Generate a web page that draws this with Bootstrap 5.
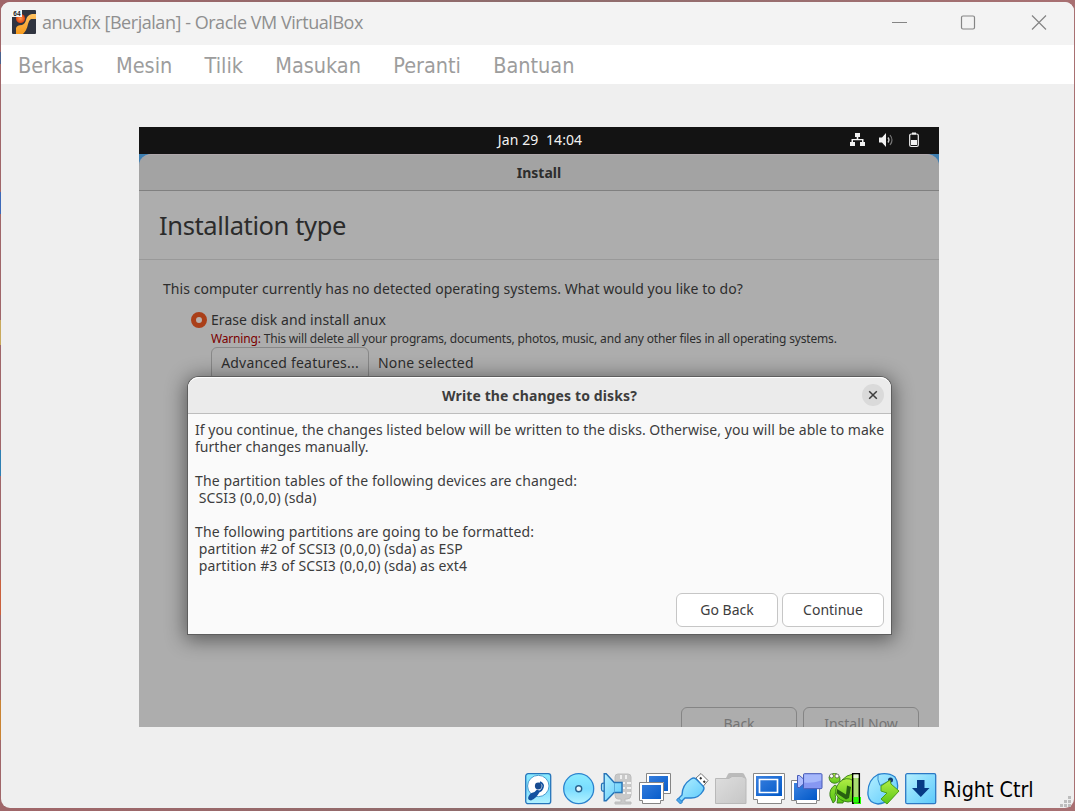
<!DOCTYPE html>
<html lang="id">
<head>
<meta charset="utf-8">
<meta name="viewport" content="width=device-width, initial-scale=1">
<title>anuxfix [Berjalan] - Oracle VM VirtualBox</title>
<link href="https://cdn.jsdelivr.net/npm/bootstrap@5.3.0/dist/css/bootstrap.min.css" rel="stylesheet">
<style>
body{width:1075px;height:811px;overflow:hidden;padding:2px 1px 3px;background:linear-gradient(#a0666900 52px,#49618e 52px 64px,#a0666900 64px 192px,#3d69b8 192px 214px,#a0666900 214px 320px,#c9a95c 320px 345px,#a0666900 345px 450px,#2e7fb3 450px 476px,#a0666900 476px 580px,#c9603c 580px 615px,#a0666900 615px 700px,#c98332 700px 740px,#a0666900 740px) 0 0/1px 811px no-repeat,linear-gradient(90deg,#a06669,#8d6c6c 50%,#a87072);font-family:"Noto Sans",sans-serif;color:#3d3d3d}
.vm-window{height:806px;background:#efefef;border-radius:9px;overflow:hidden}
.title-row{height:43px;background:#f3f3f3;padding-left:11px;padding-right:26px;padding-bottom:3px}
.title-text{font:18px "Open Sans",sans-serif;letter-spacing:-.46px;color:#8f8f8f;margin-left:6px;white-space:nowrap}
.menu-row{height:39px;background:#fff;padding-left:17px;gap:32.300px;font-family:"DejaVu Sans Condensed","DejaVu Sans",sans-serif;font-stretch:condensed;font-size:21.500px;letter-spacing:-.02px;color:#9d9d9d;line-height:42px}
.guest-wrap{padding:43px 0 0 138px}
.guest{width:800px;height:600px;background:#adadad;overflow:hidden;position:relative}
.top-panel{height:27px;background:#131313;color:#f2f2f2;position:relative;font-size:14px;line-height:26px;padding-left:2px}
.tray{position:absolute;right:17px;top:5px}
.sky{background:#3e7fb1}
.install-head{height:37px;background:#a3a3a3;border-bottom:1px solid #808080;border-top:1px solid #b0a8ac;border-radius:12px 12px 0 0;font-weight:700;font-size:14px;line-height:36px;color:#2d2d2d}
.page-title{height:69px;border-bottom:1px solid #999;padding-left:20px;font-size:25.500px;letter-spacing:-.38px;line-height:69px;color:#2b2b2b}
.t{font-size:14px;letter-spacing:.055px;white-space:pre}
.formatted{letter-spacing:.11px}
.dim{color:#2d2d2d}
.choices{padding:20px 0 0 24px}
.choices>div{line-height:18px}
.erase-row{margin:13px 0 0 28px}
.dot{width:16px;height:16px;border-radius:50%;border:5.500px solid #aa3f19;background:#b9b0ac;margin-right:4px}
.warn{font-size:12px;letter-spacing:-.178px;white-space:pre;margin-left:48px;padding-top:1px}
.warn-label{color:#7b0000}
.choices>.adv-row{margin:-1px 0 0 48px}
.adv{width:158px;height:34px;border:1px solid #888;border-radius:6px;line-height:30px;margin-right:9px;letter-spacing:.2px}
.none-sel{letter-spacing:.15px;margin-top:-3px}
.dlg{position:absolute;left:49px;top:250px;width:703px;height:257px;background:#fafafa;border-radius:11px 11px 0 0;box-shadow:0 0 0 1px #5e5e5e,0 3px 20px 3px #0000007a}
.dlg-head{height:37px;background:#ebebeb;border-bottom:1px solid #bdbdbd;border-top:1px solid #fff;border-radius:11px 11px 0 0;font-size:14px;font-weight:700;letter-spacing:.12px;line-height:36px;position:relative}
.dlg-close{position:absolute;right:7px;top:6px}
.dlg-body{padding:7px 7px 0;line-height:17px;letter-spacing:.04px}
.dlg-foot{padding:0 7px 7px}
.btn-gtk{width:102px;height:34px;background:#fff;border:1px solid #c6c6c6;border-radius:6px;padding:0;font-size:14px;line-height:30px;color:#3d3d3d}
.btn-dim{width:116px;height:34px;background:none;border:1px solid #858585;border-radius:6px;padding:0;font-size:14px;line-height:30px;color:#747474}
.foot{position:absolute;right:20px;top:580px;gap:6px}
.status{padding:46px 0 0 521px;height:124px}
.status svg{display:block;flex:none}
.host-key{font:21.300px/34px "DejaVu Sans Condensed","DejaVu Sans",sans-serif;font-stretch:condensed;color:#000;margin-left:3px;white-space:nowrap}
.grip{position:absolute;left:1060px;top:796px}
</style>
</head>
<body>
<div class="vm-window">
<header class="title-row d-flex align-items-center">
<svg width="24" height="24" viewBox="0 0 24 24"><defs><linearGradient id="or" x2="0" y2="1"><stop stop-color="#ffc261"/><stop offset="1" stop-color="#f79a1c"/></linearGradient><radialGradient id="rd"><stop stop-color="#ff9a51"/><stop offset="1" stop-color="#e2420d"/></radialGradient></defs><rect width="24" height="24" rx="1" fill="#303440"/><path d="M24 4v5h-5q-2 1-3 5-1 6-5 10H4v-6q1-3 6-3 3-1 4-5 1-5 6-6z" fill="url(#or)"/><circle cx="8.500" cy="8.500" r="4.500" fill="url(#rd)"/><rect width="10" height="7" fill="#f7f7f7"/><text x="1.300" y="5.800" font-size="6.500" font-weight="700" font-family="Liberation Sans,sans-serif" fill="#222">64</text></svg>
<span class="title-text">anuxfix [Berjalan] - Oracle VM VirtualBox</span>
<svg class="ms-auto" width="156" height="18" viewBox="0 0 156 18" fill="none" stroke="#858585" stroke-width="1.200"><path d="M0 9.500h15M140 2.500l14 14M154 2.500l-14 14"/><rect x="69.500" y="3" width="13" height="13" rx="1.500"/></svg>
</header>
<nav class="menu-row d-flex"><span>Berkas</span><span>Mesin</span><span>Tilik</span><span>Masukan</span><span>Peranti</span><span>Bantuan</span></nav>
<main class="guest-wrap">
<div class="guest">
<div class="top-panel text-center"><span class="t formatted">Jan 29  14:04</span>
<svg class="tray" width="72" height="16" viewBox="0 0 72 16" fill="#f2f2f2"><path d="M5 1h5v4H8.300v2H13.500v3H15v4h-5v-4h2V8.200H3V10h2v4H0v-4h1.500V7h5.200V5H5z"/><path d="M29 5.500h3L36 1v14l-4-4.500h-3z"/><path d="M38 5.500q2 2.500 0 5" fill="none" stroke="#ccc" stroke-width="1.300"/><path d="M40 3q4 5 0 10" fill="none" stroke="#777" stroke-width="1.200"/><path d="M62 .5h4v2h-4zM61 8h6v5h-6z"/><rect x="59.700" y="2" width="8.600" height="12.500" rx="1.500" fill="none" stroke="#f2f2f2" stroke-width="1.200"/></svg></div>
<div class="sky"><div class="install-head text-center">Install</div></div>
<div class="page-title">Installation type</div>
<div class="choices dim">
<div class="t">This computer currently has no detected operating systems. What would you like to do?</div>
<div class="t d-flex align-items-center erase-row"><span class="dot"></span><span>Erase disk and install anux</span></div>
<div class="warn"><span class="warn-label">Warning:</span> This will delete all your programs, documents, photos, music, and any other files in all operating systems.</div>
<div class="d-flex align-items-center t adv-row"><span class="adv text-center">Advanced features...</span><span class="none-sel">None selected</span></div>
</div>
<div class="foot d-flex"><button class="btn btn-dim">Back</button><button class="btn btn-dim">Install Now</button></div>
<section class="dlg d-flex flex-column">
<div class="dlg-head text-center">Write the changes to disks?
<svg class="dlg-close" width="22" height="22" viewBox="0 0 22 22"><circle cx="11" cy="11" r="11" fill="#dadada"/><path d="M7.200 7.200l7.600 7.600M14.800 7.200l-7.600 7.600" stroke="#3d3d3d" stroke-width="1.500"/></svg></div>
<div class="dlg-body t">If you continue, the changes listed below will be written to the disks. Otherwise, you will be able to make
further changes manually.

<span class="formatted">The partition tables of the following devices are changed:
 SCSI3 (0,0,0) (sda)

The following partitions are going to be formatted:
 partition #2 of SCSI3 (0,0,0) (sda) as ESP
 partition #3 of SCSI3 (0,0,0) (sda) as ext4</span></div>
<div class="d-flex justify-content-end gap-1 mt-auto dlg-foot"><button class="btn btn-gtk">Go Back</button><button class="btn btn-gtk">Continue</button></div>
</section>
</div>
</main>
<footer class="status d-flex">
<svg width="38" height="32" viewBox="0 0 38 32"><defs><linearGradient id="cy" x2="1" y2="1"><stop stop-color="#b5f0ff"/><stop offset="1" stop-color="#5bc9fb"/></linearGradient><linearGradient id="cz" x2="0" y2="1"><stop stop-color="#8cecff"/><stop offset=".5" stop-color="#79dcff"/><stop offset="1" stop-color="#b4f2ff"/></linearGradient><linearGradient id="bl" x2="1" y2="1"><stop stop-color="#3c82e0"/><stop offset="1" stop-color="#0058c8"/></linearGradient><linearGradient id="gr" x2="0" y2="1"><stop stop-color="#b2ee46"/><stop offset="1" stop-color="#59c615"/></linearGradient><linearGradient id="gy" x2="1" y2="1"><stop stop-color="#dedede"/><stop offset="1" stop-color="#c6c6c6"/></linearGradient></defs>
<rect x="3.700" y=".7" width="25" height="30" rx="2.500" fill="url(#cz)" stroke="#2675bb" stroke-width="1.300"/><circle cx="16.300" cy="13" r="10.700" fill="#fff" stroke="#4b9dd0"/><path d="M18 18q-3 7-9 9.500-4-.5-2.500-4Q8 20 11 19.500q2-.5 4-3z" fill="#1452a0"/><circle cx="16.300" cy="13" r="3.400" fill="#174b90"/><path d="M18 9q4 2 3 5-1 4-5 5" fill="none" stroke="#1452a0" stroke-width="1.600"/></svg>
<svg width="38" height="32" viewBox="0 0 38 32"><circle cx="18.700" cy="15.700" r="15" fill="url(#cz)" stroke="#2b83ce" stroke-width="1.300"/><circle cx="18.700" cy="15.700" r="3" fill="#e9f9ff" stroke="#28628f" stroke-width="1.400"/></svg>
<svg width="38" height="32" viewBox="0 0 38 32"><path d="M17 4q0-3 3-3h10q3 0 3 3v18q0 4-4 4h-2v3h6v2H17v-2h6v-3h-3q-3 0-3-4z" fill="#c9c9c9" stroke="#bcbcbc"/><path d="M23 2v4m5-4v4m-3 4h2m2 0h4m-8 5h2m2 0h4m-8 5h2m2 0h4" stroke="#f3f3f3" stroke-width="1.800"/><path d="M7 10.500q-3.500-1-3.500 1.500v4q0 3 3.500 2z" fill="#b5f0ff" stroke="#2673b7" stroke-width="1.300"/><path d="M6.200.8h2l8 8.700H24v10h-7.800L8.200 27.700h-2z" fill="url(#cy)" stroke="#2673b7" stroke-width="1.400"/><path d="M16.500 10v9.500" stroke="#5aa9da"/></svg>
<svg width="38" height="32" viewBox="0 0 38 32"><g fill="#fff" stroke="#858585"><path d="M10.500.5h24v20h-24z"/><path d="M3.500 9.500h24v18h-3v3h-18v-3h-3z"/></g><path d="M13 3h19v15h-4V9H13zM6 12h19v14H6z" fill="url(#bl)"/></svg>
<svg width="38" height="32" viewBox="0 0 38 32"><path d="M22 5l5-4.500 7 7-5 6z" fill="#fff" stroke="#777"/><path d="M26 4.500l1.500 1.500m2 2l1.500 1.500" stroke="#333" stroke-width="2"/><path d="M17 6q3-2 5 0l7 7q2 2 0 5-4 7-12 7-4 0-6 0l-4 4-3-3 4-4q0-10 9-16z" fill="url(#cy)" stroke="#2881ce" stroke-width="1.400"/><path d="M4.500 25l4 4-2 2-4-4z" fill="#4da9ec" stroke="#2881ce"/></svg>
<svg width="38" height="32" viewBox="0 0 38 32"><path d="M14 5l2-4q.5-1 2-1h12q1.500 0 2 1l2 4z" fill="#bbb"/><path d="M3.500 5.500H17l3-2h10l4 2v25h-30.500z" fill="url(#gy)" stroke="#b9b9b9"/></svg>
<svg width="38" height="32" viewBox="0 0 38 32"><path d="M3.500.5h31v26h-3v4h-24v-4h-4z" fill="#fff" stroke="#888"/><path d="M6 3h26v20H6z" fill="url(#bl)"/><path d="M9.500 6.500h18v13h-18z" fill="none" stroke="#fff" stroke-width="1.700"/></svg>
<svg width="38" height="32" viewBox="0 0 38 32"><path d="M3.500 7.500h28v20h-3v3h-20v-3h-5z" fill="#fff" stroke="#888"/><path d="M6 10h23v17H6z" fill="url(#bl)"/><path d="M9.500 2.500h2l4 3.500v5l-4 3.500h-2z" fill="#aebdff" stroke="#475bb7"/><rect x="15.500" y=".7" width="18.500" height="15" rx="1" fill="#8798f2" stroke="#475bb7"/><path d="M16.200 1.400h17v6q-9 3-17 2z" fill="#a6b8fb"/></svg>
<svg width="38" height="32" viewBox="0 0 38 32"><g fill="url(#gr)" stroke="#367d15" stroke-width=".9"><path d="M9 12q-6 4-5 11l3 7q4-2 2-9l4-6zM16 7l5-4 9-3 3 2-3 9zM12 24l-1 6h6l1-4zM24 25l4 5h5l-3-8z"/><path d="M11 13Q16 4 24 6q8 3 8 12-2 11-10 11-9-1-12-8-1-4 1-8z"/><path d="M3 4q3-5 8-3 4 3 3 7-5 4-9 1-2-2-2-5z"/></g><circle cx="5.500" cy="3" r="2" fill="#fff" stroke="#333" stroke-width=".6"/><circle cx="11" cy="3" r="2" fill="#fff" stroke="#333" stroke-width=".6"/><path d="M11 16l9 5.500 1-9 4 1.500-2 11-3 1.500-9-6z" fill="#286011"/><path d="M26.700.8h6.600v29.400h-6.600z" fill="#a8dd70" stroke="#000" stroke-width="1.500"/><path d="M27.500 1.500h5V5h-5z" fill="#e6f5dc"/><path d="M27.500 24h5v5.500h-5zM34 24h1v7H28v-1h6z" fill="#22ff00"/></svg>
<svg width="38" height="32" viewBox="0 0 38 32"><path d="M14 1.500Q24-1 31 4q4 6 2 13-6 13-19 14-9-1-10-9Q3 7 14 1.500z" fill="url(#cy)" stroke="#2881ce" stroke-width="1.300"/><path d="M14 1.500q-1 5 2 11l12-6" fill="none" stroke="#358bce"/><circle cx="26.500" cy="7" r="2.500" fill="#163b6d"/><path d="M17 13l9-6 1 4 8 7-12 13-6-5 6-6-6-2z" fill="url(#gr)" stroke="#4c9f1b"/></svg>
<svg width="38" height="32" viewBox="0 0 38 32"><rect x="3.700" y=".7" width="30" height="30" rx="1.500" fill="url(#cy)" stroke="#2c79c4" stroke-width="1.300"/><path d="M15 7h7.500v8h5l-8.700 9-8.800-9h5z" fill="#063a85"/></svg>
<span class="host-key">Right Ctrl</span>
</footer>
</div>
<svg class="grip" width="12" height="13" viewBox="0 0 12 13" fill="#bdbdbd"><path d="M8 0h3v3H8zM4 4h3v3H4zM8 4h3v3H8zM0 8h3v3H0zM4 8h3v3H4zM8 8h3v3H8z"/></svg>
<script src="https://cdn.jsdelivr.net/npm/bootstrap@5.3.0/dist/js/bootstrap.bundle.min.js"></script>
</body>
</html>
